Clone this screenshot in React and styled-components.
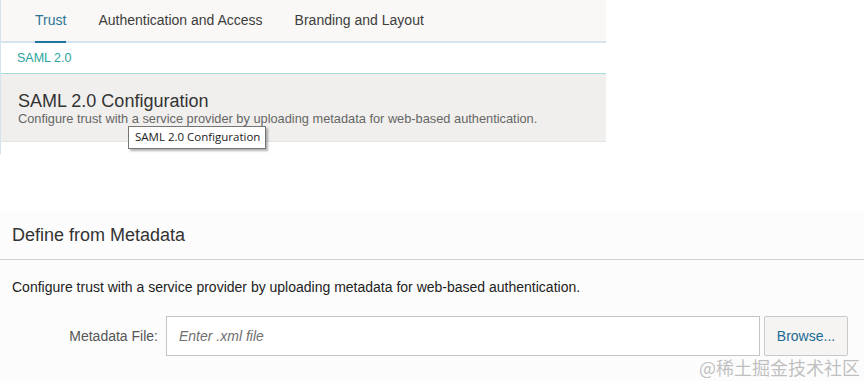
import React from "react";
import styled, { createGlobalStyle } from "styled-components";

const GlobalStyle = createGlobalStyle`
  body {
    margin: 0;
    background: #fff;
    font-family: "Liberation Sans", Arial, sans-serif;
  }
`;

const Page = styled.div`
  position: relative;
  display: flex;
  flex-direction: column;
  width: 864px;
  height: 381px;
  overflow: hidden;
  background: #fff;
`;

const TopPanel = styled.div`
  position: relative;
  width: 605px;
  border-left: 1px solid #d2e4ee;
  padding-bottom: 12px;
`;

const TabBar = styled.div`
  display: flex;
  height: 41px;
  padding-left: 34px;
  gap: 32px;
  background: #f9f8f6;
  border-bottom: 2px solid #d3e4ee;
`;

const Tab = styled.div`
  display: flex;
  align-items: center;
  height: 43px;
  margin-bottom: -2px;
  padding-bottom: 4px;
  box-sizing: border-box;
  font-size: 14px;
  color: ${(p) => (p.$active ? "#2d7399" : "#3d3d3d")};
  box-shadow: ${(p) => (p.$active ? "inset 0 -2px 0 #1f739c" : "none")};
`;

const Crumb = styled.div`
  display: flex;
  align-items: center;
  height: 30px;
  padding-left: 16px;
  font-size: 12.5px;
  color: #2ba39b;
  border-bottom: 1px solid #a3ddd8;
`;

const ConfigHead = styled.div`
  height: 68px;
  padding: 17px 0 0 17px;
  box-sizing: border-box;
  background: #f0efed;
  border-bottom: 1px solid #e4e4e2;
`;

const ConfigTitle = styled.div`
  font-size: 18px;
  color: #333;
  line-height: 20px;
`;

const ConfigDesc = styled.div`
  font-size: 12.8px;
  color: #666;
  line-height: 14px;
  margin-top: 1px;
`;

const Tooltip = styled.div`
  position: absolute;
  left: 127px;
  top: 126px;
  padding: 3px 5px 4px 6px;
  background: #fff;
  border: 1px solid #767676;
  box-shadow: 2px 2px 2px rgba(0, 0, 0, 0.3);
  font-family: "Open Sans", "Noto Sans", sans-serif;
  font-size: 11.5px;
  line-height: 14px;
  color: #222;
  white-space: nowrap;
`;

const Section = styled.div`
  flex: 1;
  margin-top: 58px;
  background: #fcfcfc;
`;

const SectionHead = styled.div`
  display: flex;
  align-items: center;
  height: 47px;
  padding-left: 12px;
  font-size: 18px;
  color: #333;
  border-bottom: 1px solid #d4d2cf;
`;

const SectionBody = styled.div`
  padding: 19px 12px 0 12px;
`;

const Intro = styled.div`
  font-size: 14px;
  color: #222;
  line-height: 16px;
`;

const FieldRow = styled.div`
  display: flex;
  align-items: center;
  margin-top: 21px;
`;

const Label = styled.label`
  width: 146px;
  text-align: right;
  font-size: 14px;
  color: #555;
  margin-right: 8px;
`;

const Input = styled.input`
  width: 594px;
  height: 40px;
  box-sizing: border-box;
  border: 1px solid #c4c4c4;
  background: #fff;
  padding: 0 12px;
  font-family: "Liberation Sans", Arial, sans-serif;
  font-size: 14px;
  outline: none;
  &::placeholder {
    color: #707070;
    font-style: italic;
  }
`;

const Button = styled.button`
  margin-left: 4px;
  width: 84px;
  height: 40px;
  border: 1px solid #c9c9c9;
  border-radius: 2px;
  background: #f5f4f2;
  color: #1c6a91;
  font-family: "Liberation Sans", Arial, sans-serif;
  font-size: 14px;
`;

const Watermark = styled.div`
  position: absolute;
  right: 4px;
  bottom: 4px;
  font-family: "Noto Sans CJK SC", sans-serif;
  font-size: 18px;
  line-height: 20px;
  color: rgba(150, 150, 150, 0.6);
`;

export default function App() {
  return (
    <>
      <GlobalStyle />
      <Page>
        <TopPanel>
          <TabBar>
            <Tab $active>Trust</Tab>
            <Tab>Authentication and Access</Tab>
            <Tab>Branding and Layout</Tab>
          </TabBar>
          <Crumb>SAML 2.0</Crumb>
          <ConfigHead>
            <ConfigTitle>SAML 2.0 Configuration</ConfigTitle>
            <ConfigDesc>
              Configure trust with a service provider by uploading metadata for web-based authentication.
            </ConfigDesc>
          </ConfigHead>
          <Tooltip>SAML 2.0 Configuration</Tooltip>
        </TopPanel>
        <Section>
          <SectionHead>Define from Metadata</SectionHead>
          <SectionBody>
            <Intro>
              Configure trust with a service provider by uploading metadata for web-based authentication.
            </Intro>
            <FieldRow>
              <Label>Metadata File:</Label>
              <Input placeholder="Enter .xml file" />
              <Button>Browse...</Button>
            </FieldRow>
          </SectionBody>
        </Section>
        <Watermark>@稀土掘金技术社区</Watermark>
      </Page>
    </>
  );
}
